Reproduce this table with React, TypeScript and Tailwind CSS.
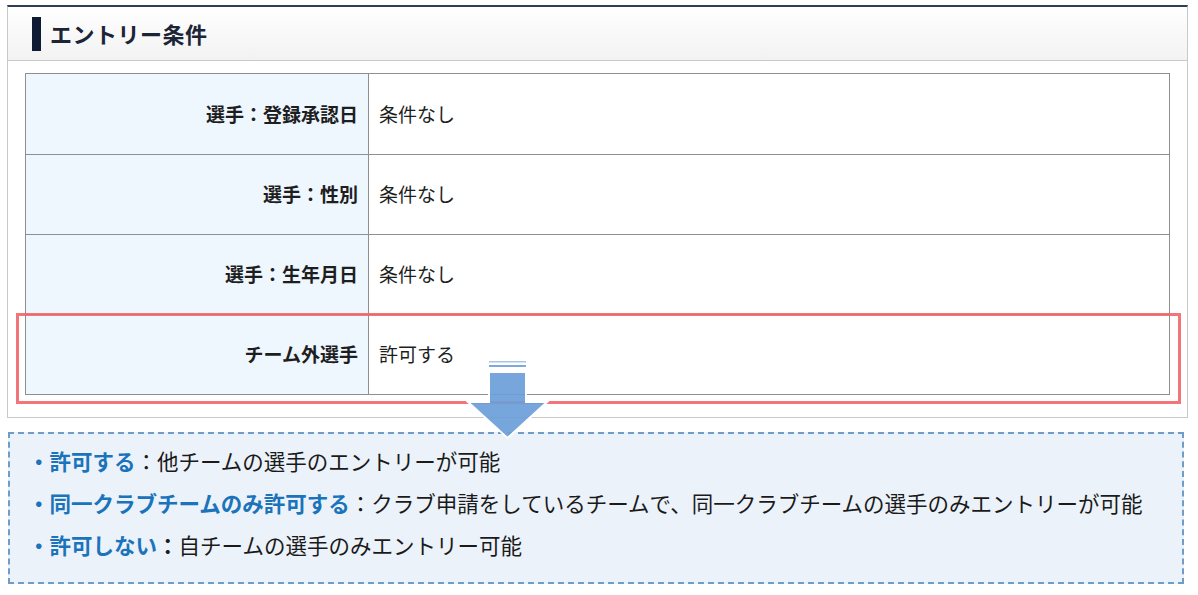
import React from 'react'

const FONT = { fontFamily: '"Noto Sans CJK JP", "Noto Sans", sans-serif' }

const rows = [
  { label: '選手：登録承認日', value: '条件なし' },
  { label: '選手：性別', value: '条件なし' },
  { label: '選手：生年月日', value: '条件なし' },
  { label: 'チーム外選手', value: '許可する' },
]

// Striped down arrow that points from the highlighted row to the notes
function DownArrow() {
  return (
    <svg className="absolute left-[466px] top-[358px]" width="84" height="84" viewBox="0 0 84 84">
      <rect x="23" y="3" width="37" height="1.5" fill="#a9c6ea" />
      <rect x="23" y="7" width="37" height="2" fill="#7fa9dc" />
      <path
        d="M23 14 H60 V44 H81 L41.5 80 L2 44 H23 Z"
        fill="#6a9ed8"
        fillOpacity="0.92"
        stroke="#ffffff"
        strokeWidth="2"
        strokeLinejoin="miter"
      />
    </svg>
  )
}

export default function App() {
  return (
    <div className="relative w-[1198px] h-[595px] bg-white overflow-hidden" style={FONT}>
      <div className="ml-[7px] mt-[5px] w-[1181px] border-t-2 border-t-[#2f3e52] border-x border-b border-[#c9c9c9]">
        <div className="h-[54px] flex items-center bg-gradient-to-b from-white to-[#f2f2f2] border-b border-[#c9c9c9]">
          <span className="ml-[24px] w-[9px] h-[34px] bg-[#0e1b32]" />
          <span className="ml-[9px] text-[22px] font-bold text-[#1b2536] tracking-[0.5px]">エントリー条件</span>
        </div>
        <div className="px-[17px] pt-[12px] pb-[22px]">
          <div className="border border-[#8f8f8f]">
            {rows.map((r, i) => (
              <div key={i} className={'flex h-[80px]' + (i > 0 ? ' border-t border-[#8f8f8f]' : '')}>
                <div className="w-[343px] shrink-0 bg-[#eef6fe] border-r border-[#8f8f8f] flex items-center justify-end pr-[10px] text-[19px] font-bold text-[#1e1e1e]">
                  {r.label}
                </div>
                <div className="flex-1 flex items-center pl-[10px] text-[19px] text-[#1e1e1e]">{r.value}</div>
              </div>
            ))}
          </div>
        </div>
      </div>

      <div className="absolute left-[16px] top-[313px] w-[1165px] h-[91px] border-[3px] border-[#f2666a]/90" />
      <DownArrow />

      <div className="ml-[8px] mt-[14px] w-[1176px] h-[152px] border-2 border-dashed border-[#6f9dc9] bg-[#ecf2f9] pl-[18px] pt-[6px] text-[21.5px] leading-[42px] text-[#1a1a1a]">
        <div>
          <span className="font-bold text-[#1b74bb]">・許可する</span>
          <span>：他チームの選手のエントリーが可能</span>
        </div>
        <div>
          <span className="font-bold text-[#1b74bb]">・同一クラブチームのみ許可する</span>
          <span>：クラブ申請をしているチームで、同一クラブチームの選手のみエントリーが可能</span>
        </div>
        <div>
          <span className="font-bold text-[#1b74bb]">・許可しない</span>
          <span className="font-bold">：</span>
          <span>自チームの選手のみエントリー可能</span>
        </div>
      </div>
    </div>
  )
}
